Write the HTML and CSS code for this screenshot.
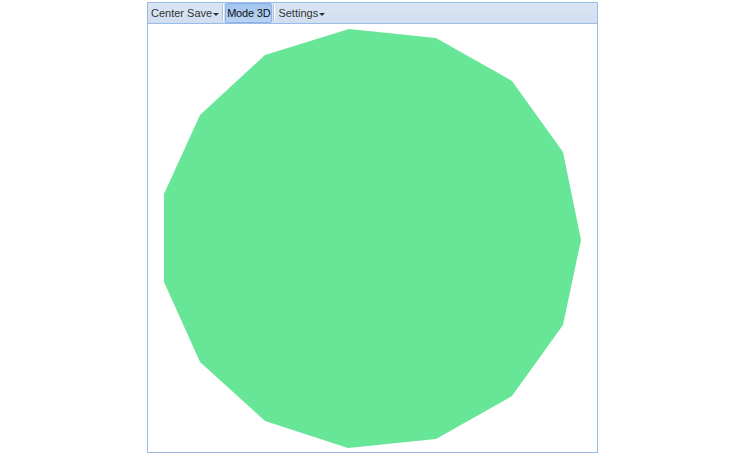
FILE: index.html
```html
<!DOCTYPE html>
<html>
<head>
<meta charset="utf-8">
<link rel="stylesheet" href="styles.css">
</head>
<body>
<div class="frame">
  <div class="toolbar">
    <span class="item">Center Save<span class="caret"></span></span>
    <span class="sep"></span>
    <span class="item pressed">Mode 3D</span>
    <span class="sep"></span>
    <span class="item">Settings<span class="caret"></span></span>
  </div>
  <div class="canvas">
    <svg width="449" height="428" viewBox="0 0 449 428">
      <polygon fill="#68e697" points="201,5 288,14 364,57 415,128 433,216 415,301 364,372 288,415 200,424 117,397 52,338 16,258 16,170 52,91 117,31"/>
    </svg>
  </div>
</div>
</body>
</html>
```
FILE: styles.css
```css
html, body { margin: 0; padding: 0; background: #fff; }
body { padding-top: 2px; }
.frame {
  width: 449px;
  margin-left: 147px;
  border: 1px solid #99bbe8;
  background: #fff;
}
.toolbar {
  height: 20px;
  display: flex;
  align-items: center;
  padding-left: 1px;
  background: linear-gradient(#dae6f4, #d0def0);
  border-bottom: 1px solid #99bbe8;
  font-family: "Liberation Sans", Arial, sans-serif;
  font-size: 11px;
  color: #333;
}
.item {
  display: flex;
  align-items: center;
  height: 18px;
  padding: 0 1px;
  border: 1px solid transparent;
  border-radius: 2px;
}
.pressed {
  padding: 0 1px;
  letter-spacing: -0.2px;
  background: linear-gradient(#9fc4f0, #b9d4f3);
  border-color: #8db2e3;
  color: #111;
}
.caret {
  display: inline-block;
  width: 0; height: 0;
  margin-left: 1px;
  margin-top: 2px;
  border-left: 3px solid transparent;
  border-right: 3px solid transparent;
  border-top: 3px solid #333;
}
.sep {
  width: 1px;
  height: 16px;
  margin: 0 1px;
  background: #a9c2e2;
  border-right: 1px solid #fff;
}
.canvas { height: 428px; }
.canvas svg { display: block; }
```
